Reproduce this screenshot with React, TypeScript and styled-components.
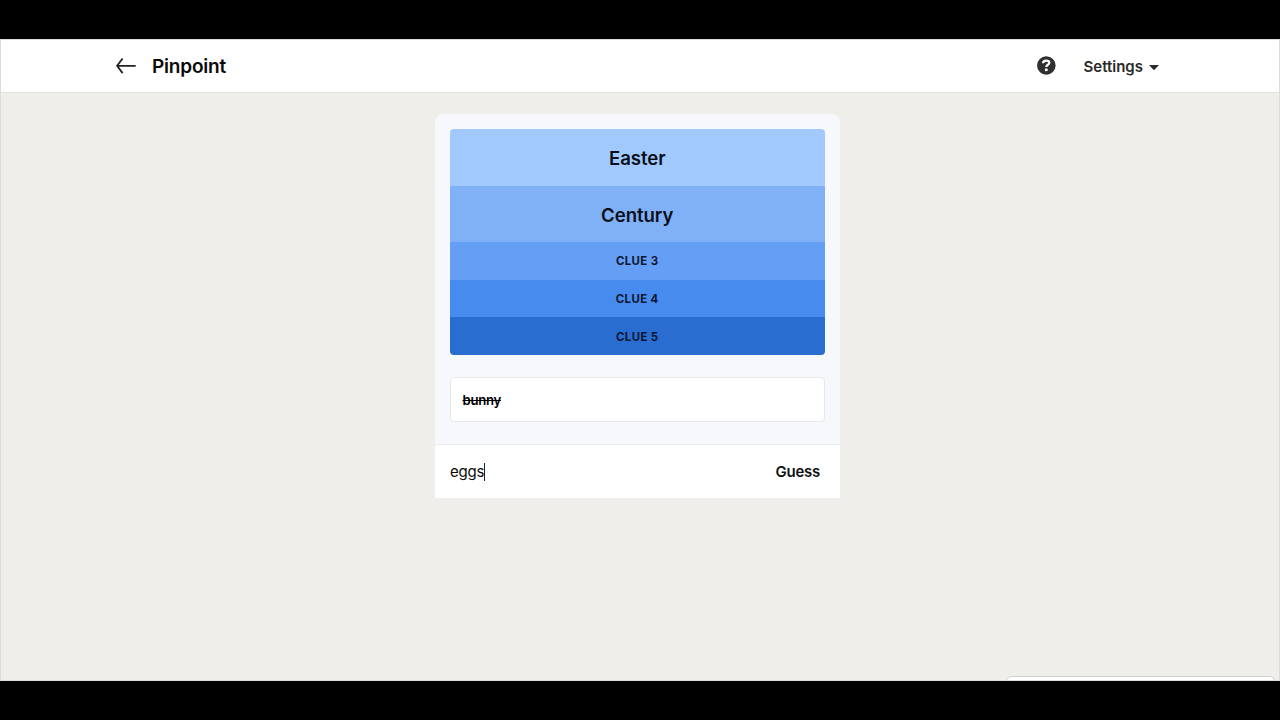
import React, { useState } from 'react'
import styled, { createGlobalStyle } from 'styled-components'

const GlobalStyle = createGlobalStyle`
  * {
    box-sizing: border-box;
  }

  body {
    margin: 0;
    background: #000;
    font-family: 'Inter', 'Liberation Sans', sans-serif;
    color: #0A0A0A;
    overflow: hidden;
  }
`;

const Screen = styled.div`
  display: flex;
  flex-direction: column;
  height: 720px;
  padding: 39px 0;
  background: #000;
`;

const Page = styled.div`
  flex: 1;
  display: flex;
  flex-direction: column;
  background: #EFEEEA;
  border: 1px solid #DDDCD9;
  position: relative;
  overflow: hidden;
`;

const NavBar = styled.header`
  height: 53px;
  flex-shrink: 0;
  display: flex;
  align-items: center;
  padding: 0 120px 0 114px;
  background: #FFF;
  border-bottom: 1px solid #E4E3E0;
`;

const BackArrow = styled.svg`
  width: 22px;
  height: 18px;
  display: block;
`;

const Title = styled.h1`
  margin: 1px 0 0 15px;
  flex: 1;
  font-size: 19px;
  font-weight: 600;
  line-height: 24px;
  letter-spacing: -0.2px;
  color: #0A0A0A;
`;

const HelpIcon = styled.svg`
  width: 19px;
  height: 19px;
  margin-bottom: 1px;
  display: block;
`;

const SettingsButton = styled.button`
  display: flex;
  align-items: center;
  gap: 6px;
  margin: 2px 0 0 28px;
  padding: 0;
  border: 0;
  background: none;
  font-family: inherit;
  font-size: 15px;
  font-weight: 600;
  line-height: 20px;
  letter-spacing: 0;
  color: #2A2A2A;
`;

const Card = styled.main`
  width: 405px;
  height: 384px;
  margin: 21px 0 0 434px;
  display: flex;
  flex-direction: column;
  background: #F6F8FB;
  border-radius: 8px 8px 0 0;
  overflow: hidden;
`;

const Board = styled.div`
  flex: 1;
  padding: 15.4px 15.5px 0 15px;
`;

const Clues = styled.div`
  border-radius: 4px;
  overflow: hidden;
`;

const Clue = styled.div<{ $color: string; $open?: boolean }>`
  display: flex;
  align-items: center;
  justify-content: center;
  height: ${(props) => (props.$open ? '56.3px' : '37.6px')};
  padding-top: ${(props) => (props.$open ? '1.6px' : '1.4px')};
  background: ${(props) => props.$color};
  font-size: ${(props) => (props.$open ? '18.6px' : '11.4px')};
  font-weight: ${(props) => (props.$open ? 600 : 700)};
  letter-spacing: ${(props) => (props.$open ? '-0.05px' : '0.4px')};
  color: ${(props) => (props.$open ? '#0A0F1A' : '#0A1630')};
`;

const PastGuess = styled.div`
  display: flex;
  align-items: center;
  height: 45px;
  margin-top: 22.2px;
  padding: 1px 0 0 11.5px;
  background: #FFF;
  border: 1px solid #E6E9EC;
  border-radius: 4px;
  font-size: 13.2px;
  font-weight: 600;
  letter-spacing: -0.3px;
  color: #000;
  text-decoration: line-through;
`;

const GuessForm = styled.form`
  display: flex;
  align-items: center;
  height: 54px;
  padding: 0 20px 0 15px;
  background: #FFF;
  border-top: 1px solid #E8EBEE;
`;

const GuessText = styled.div`
  flex: 1;
  display: flex;
  align-items: center;
  font-size: 15px;
  letter-spacing: -0.25px;
`;

const Caret = styled.span`
  width: 1px;
  height: 18px;
  background: #222;
`;

const GuessButton = styled.button`
  padding: 0;
  border: 0;
  background: none;
  font-family: inherit;
  font-size: 15px;
  font-weight: 600;
  letter-spacing: -0.25px;
  color: #111;
`;

const MessagingTab = styled.div`
  position: absolute;
  right: 3px;
  bottom: -36px;
  width: 271px;
  height: 40px;
  background: #FFF;
  border: 1px solid #D0D0CD;
  border-radius: 7px 7px 0 0;
`;

const clues = [
  { text: 'Easter', color: '#A1C9FE', open: true },
  { text: 'Century', color: '#80B1F6', open: true },
  { text: 'CLUE 3', color: '#659FF5' },
  { text: 'CLUE 4', color: '#478BEE' },
  { text: 'CLUE 5', color: '#296DD0' },
];

const App = () => {
  const [guess] = useState('eggs');

  return (
    <>
      <GlobalStyle />
      <Screen>
        <Page>
          <NavBar>
            <BackArrow viewBox="0 0 22 18" fill="none" stroke="#222" strokeWidth="1.8">
              <path d="M20.7 8.8H2.2M7.6 1.5L2.1 8.8L7.6 16.1" />
            </BackArrow>
            <Title>Pinpoint</Title>
            <HelpIcon viewBox="0 0 19 19">
              <circle cx="9.3" cy="9.5" r="9.3" fill="#303030" />
              <path d="M6 7.2C6.1 5.3 7.4 4.6 9.2 4.6C11.1 4.6 12.3 5.4 12.3 6.8C12.3 8.8 9.3 8.7 9.3 11" fill="none" stroke="#FFF" strokeWidth="2.3" />
              <circle cx="9.3" cy="13.8" r="1.5" fill="#FFF" />
            </HelpIcon>
            <SettingsButton>
              Settings
              <svg width="10" height="5" viewBox="0 0 10 5">
                <path d="M0 0H10L5.8 4.6Q5 5.2 4.2 4.6Z" fill="#2A2A2A" />
              </svg>
            </SettingsButton>
          </NavBar>

          <Card>
            <Board>
              <Clues>
                {clues.map((clue) => (
                  <Clue key={clue.text} $color={clue.color} $open={clue.open}>{clue.text}</Clue>
                ))}
              </Clues>
              <PastGuess>bunny</PastGuess>
            </Board>
            <GuessForm onSubmit={(e) => e.preventDefault()}>
              <GuessText>
                {guess}
                <Caret />
              </GuessText>
              <GuessButton>Guess</GuessButton>
            </GuessForm>
          </Card>

          <MessagingTab />
        </Page>
      </Screen>
    </>
  )
}

export default App
